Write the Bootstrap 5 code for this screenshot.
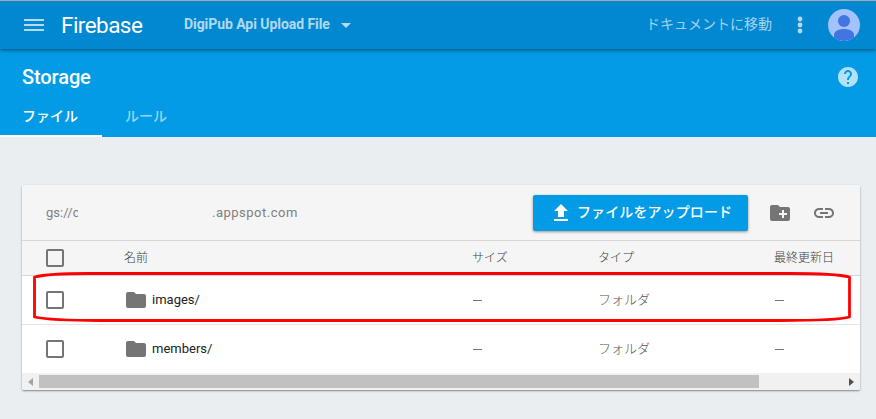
<!DOCTYPE html>
<html lang="ja">
<head>
<meta charset="utf-8">
<meta name="viewport" content="width=device-width, initial-scale=1">
<title>Storage – Firebase</title>
<link href="https://cdn.jsdelivr.net/npm/bootstrap@5.3.0/dist/css/bootstrap.min.css" rel="stylesheet">
<style>
body{font-family:Roboto,"Noto Sans CJK JP",sans-serif;font-size:13px;line-height:20px;background:#eaeef1;height:419px;overflow:hidden;color:#212121}
svg{display:block;flex:none}
.topbar{height:49px;border-top:1px solid #a6a9ab;background:#0288d1;box-shadow:0 1px 4px rgba(0,0,0,.5);padding:0 16px 0 24px;color:rgba(255,255,255,.7);z-index:2}
.brand{font-size:22.5px;line-height:28px;width:82px;margin-left:17px;color:#fff;letter-spacing:-.55px}
.project{margin-left:41px;padding-bottom:2px;font-size:14px;font-weight:700;letter-spacing:-.06px;width:147px;white-space:nowrap}
.doc-link{font-size:14px;font-weight:400;padding-bottom:3px;color:rgba(255,255,255,.65)}
.subhead{height:88px;background:#039be5;color:#fff}
.subhead h1{font-size:20px;line-height:24px;font-weight:500;letter-spacing:-.1px;margin:0;padding-left:22px}
.titlebar{height:56px;padding-right:16px}
.tabs .nav-link{padding:0 24px 0 22px;height:32px;font-size:14px;line-height:22px;font-weight:500;color:rgba(255,255,255,.6);border-bottom:2px solid transparent}
.tabs .nav-link.active{color:#fff;border-color:#fff;width:102px;margin-right:1px}
.panel{margin:48px 16px 0 22px;height:205px;background:#fff;border-radius:2px;box-shadow:0 1px 2px rgba(0,0,0,.45)}
.toolbar{height:56px;gap:20px;background:#f5f5f5;border-bottom:1px solid #d6d6d6;border-radius:2px 2px 0 0;padding:0 24px;color:#808080}
.bucket-prefix{width:32px;margin-right:134px;letter-spacing:.05px;overflow:hidden}
.bucket-host{letter-spacing:.5px}
.upload{width:215px;height:36px;gap:6px;padding:0 0 0 18px;background:#039be5;border:0;border-radius:2px;color:#fff;font-size:14px;line-height:20px;font-weight:500;letter-spacing:.1px;box-shadow:0 1px 3px rgba(0,0,0,.4)}
.upload span{padding-bottom:2px}
.grid-row{display:grid;grid-template-columns:78px 348px 126px 176px 1fr;height:49px;align-items:center;padding-left:24px;color:#555;font-weight:300;border-bottom:1px solid #e5e5e5}
.grid-head{height:35px;background:#f5f5f5;border-color:#d6d6d6;font-size:12px;color:#404040}
.grid-last{height:48px;border:0}
.item-name{font-weight:400;color:#212121}
.dash{width:9px;height:1px;margin-left:1px;background:#757575}
.check{width:18px;height:18px;border:2px solid #757575;border-radius:2px}
.scroller{height:17px;background:#f1f1f1;padding:0 6px;border-radius:0 0 2px 2px}
.thumb{width:720px;height:13px;background:#c1c1c1;margin-left:6px}
.callout-ring{left:0;top:0;pointer-events:none;z-index:3}
</style>
<script src="https://cdn.jsdelivr.net/npm/bootstrap@5.3.0/dist/js/bootstrap.bundle.min.js"></script>
</head>
<body class="position-relative">
<header class="topbar d-flex align-items-center position-relative">
  <svg width="20" height="14" viewBox="0 0 20 14" fill="#b3dbf1"><path d="M0 1h20v2H0zM0 6h20v2H0zM0 11h20v2H0z"/></svg>
  <span class="brand">Firebase</span>
  <span class="project">DigiPub Api Upload File</span>
  <svg class="ms-2" width="14" height="8" viewBox="0 0 14 8" fill="#b3dbf1"><path d="M2 2h10L7 7z"/></svg>
  <span class="doc-link ms-auto">ドキュメントに移動</span>
  <svg width="56" height="18" viewBox="0 0 56 18" fill="#b3dbf1"><circle cx="28" cy="3" r="2.400"/><circle cx="28" cy="9" r="2.400"/><circle cx="28" cy="15" r="2.400"/></svg>
  <svg width="32" height="32" viewBox="0 0 32 32"><circle cx="16" cy="16" r="16" fill="#a1c2fa"/><circle cx="16" cy="12" r="6" fill="#4274e2"/><path d="M6 28.500V26c0-4 5-6 10-6s10 2 10 6v2.500A16 16 0 0 1 6 28.500z" fill="#4274e2"/></svg>
</header>
<section class="subhead">
  <div class="titlebar d-flex align-items-center justify-content-between">
    <h1>Storage</h1>
    <svg width="24" height="24" viewBox="0 0 24 24" fill="#b3e1f7"><path d="M12 2C6.480 2 2 6.480 2 12s4.480 10 10 10 10-4.480 10-10S17.520 2 12 2zm1 17h-2v-2h2v2zm2.070-7.750l-.9.920C13.450 12.900 13 13.500 13 15h-2v-.5c0-1.100.45-2.100 1.170-2.830l1.240-1.260c.37-.36.59-.86.59-1.410 0-1.100-.9-2-2-2s-2 .9-2 2H8c0-2.210 1.790-4 4-4s4 1.790 4 4c0 .88-.36 1.680-.93 2.250z"/></svg>
  </div>
  <nav class="tabs nav"><a class="nav-link active" href="#">ファイル</a><a class="nav-link" href="#">ルール</a></nav>
</section>
<main class="panel">
  <div class="toolbar d-flex align-items-center">
    <div class="d-flex me-auto"><span class="bucket-prefix">gs://c</span><span class="bucket-host">.appspot.com</span></div>
    <button class="upload btn d-flex align-items-center" type="button">
      <svg width="20" height="20" viewBox="0 0 20 20" fill="#fff"><path d="M7 14V8H3l7-7 7 7h-4v6zM3 16h14v2H3z"/></svg><span>ファイルをアップロード</span>
    </button>
    <svg width="24" height="24" viewBox="0 0 24 24" fill="#757575"><path d="M20 6h-8l-2-2H4c-1.110 0-1.990.89-1.990 2L2 18c0 1.110.89 2 2 2h16c1.110 0 2-.89 2-2V8c0-1.110-.89-2-2-2zm-1 8h-3v3h-2v-3h-3v-2h3V9h2v3h3v2z"/></svg>
    <svg width="24" height="24" viewBox="0 0 24 24" fill="#757575"><path d="M3.900 12c0-1.710 1.390-3.100 3.100-3.100h4V7H7c-2.760 0-5 2.240-5 5s2.240 5 5 5h4v-1.900H7c-1.710 0-3.100-1.390-3.100-3.100zM8 13h8v-2H8v2zm9-6h-4v1.900h4c1.710 0 3.100 1.390 3.100 3.100s-1.390 3.100-3.100 3.100h-4V17h4c2.760 0 5-2.240 5-5s-2.240-5-5-5z"/></svg>
  </div>
  <div class="grid-row grid-head"><span class="check"></span><span>名前</span><span>サイズ</span><span>タイプ</span><span>最終更新日</span></div>
  <div class="grid-row">
    <span class="check"></span>
    <span class="item-name d-flex align-items-center"><svg width="24" height="24" viewBox="0 0 24 24" fill="#757575"><path d="M10 4H4c-1.100 0-1.990.9-1.990 2L2 18c0 1.100.9 2 2 2h16c1.100 0 2-.9 2-2V8c0-1.100-.9-2-2-2h-8l-2-2z"/></svg><span class="ms-1">images/</span></span>
    <span class="dash"></span><span>フォルダ</span><span class="dash"></span>
  </div>
  <div class="grid-row grid-last">
    <span class="check"></span>
    <span class="item-name d-flex align-items-center"><svg width="24" height="24" viewBox="0 0 24 24" fill="#757575"><path d="M10 4H4c-1.100 0-1.990.9-1.990 2L2 18c0 1.100.9 2 2 2h16c1.100 0 2-.9 2-2V8c0-1.100-.9-2-2-2h-8l-2-2z"/></svg><span class="ms-1">members/</span></span>
    <span class="dash"></span><span>フォルダ</span><span class="dash"></span>
  </div>
  <div class="scroller d-flex align-items-center">
    <svg width="5" height="8" viewBox="0 0 5 8" fill="#a3a3a3"><path d="M5 0v8L0 4z"/></svg><span class="thumb"></span><svg class="ms-auto" width="5" height="8" viewBox="0 0 5 8" fill="#505050"><path d="M0 0v8l5-4z"/></svg>
  </div>
</main>
<svg class="callout-ring position-absolute" width="876" height="419" viewBox="0 0 876 419" fill="none" stroke="#f00" stroke-width="2.800" stroke-linejoin="round"><path d="M34.500 277C46 274 75 273.500 88 273.500H790C815 273.500 840 274.500 849.500 277V317C840 320 805 320.500 780 320.500H100C75 320.500 46 319.500 34.500 317Z"/></svg>
</body>
</html>
